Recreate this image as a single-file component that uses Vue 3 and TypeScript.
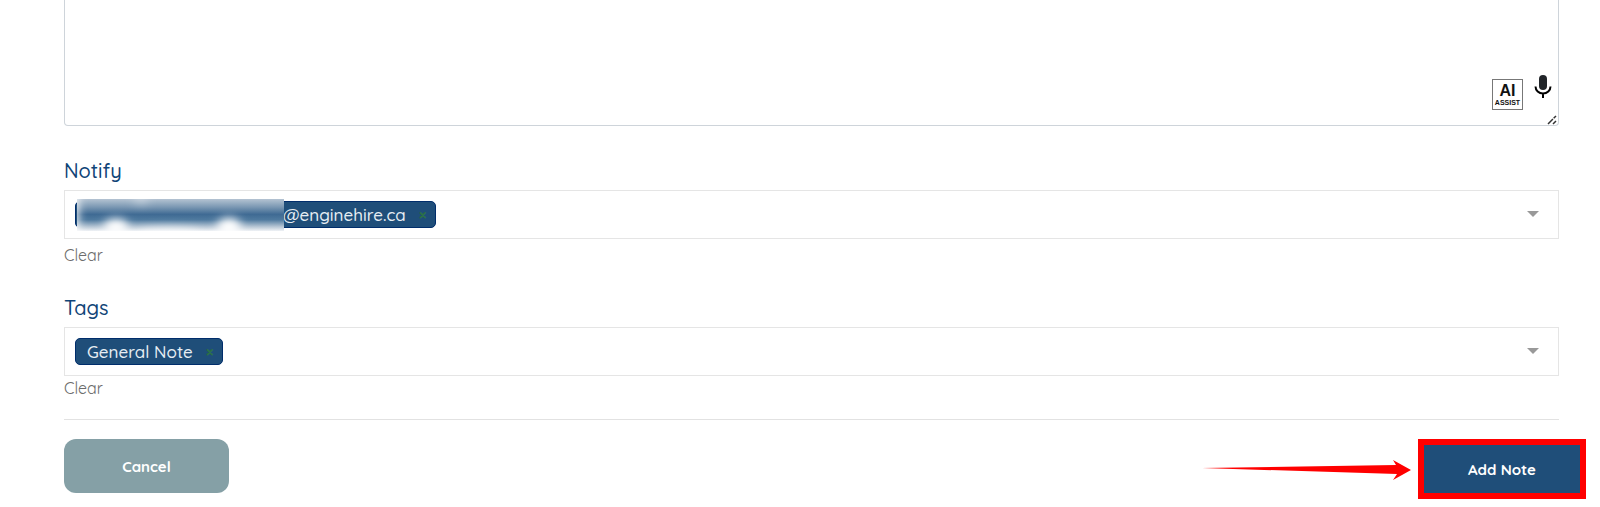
<script setup lang="ts">
import { ref } from 'vue'

interface Field {
  id: string
  label: string
  values: { text: string; masked: boolean }[]
}

const note = ref('')
const fields = ref<Field[]>([
  { id: 'notify', label: 'Notify', values: [{ text: '@enginehire.ca', masked: true }] },
  { id: 'tags', label: 'Tags', values: [{ text: 'General Note', masked: false }] },
])

function remove(field: Field, index: number) {
  field.values.splice(index, 1)
}
</script>

<template>
  <form class="note-form" @submit.prevent>
    <div class="editor">
      <textarea v-model="note" class="note" aria-label="Note"></textarea>
      <div class="tools">
        <button type="button" class="ai"><b>AI</b><span>ASSIST</span></button>
        <button type="button" class="mic" aria-label="Dictate">
          <svg width="18" height="24" viewBox="0 0 18 24">
            <rect x="5" y="0" width="8" height="15" rx="4" fill="#212529" />
            <path d="M1.500 11.500a7.500 7 0 0 0 15 0M9 18.500V23" fill="none" stroke="#000" stroke-width="2" />
          </svg>
        </button>
      </div>
      <svg class="grip" width="10" height="10" viewBox="0 0 10 10" aria-hidden="true">
        <path d="M1 9L9 1M6 9L9 6" fill="none" stroke="#333" stroke-width="1.500" stroke-dasharray="7 1" />
      </svg>
    </div>

    <section v-for="field in fields" :key="field.id" :class="['field', field.id]">
      <label class="label" :for="field.id">{{ field.label }}</label>
      <div class="select">
        <span v-for="(value, i) in field.values" :key="value.text" class="chip">
          <svg v-if="value.masked" class="mask" width="207" height="32" viewBox="0 0 207 32" aria-hidden="true">
            <defs>
              <linearGradient id="fade" x1="0" y1="0" x2="0" y2="1">
                <stop offset="0" stop-color="#b4c3d2" />
                <stop offset="0.250" stop-color="#7b98b3" />
                <stop offset="0.480" stop-color="#3f6a93" />
                <stop offset="0.650" stop-color="#4f7a9f" />
                <stop offset="0.850" stop-color="#b0c1d1" />
                <stop offset="1" stop-color="#f0f3f6" />
              </linearGradient>
              <filter id="soft" x="-20%" y="-60%" width="140%" height="220%">
                <feGaussianBlur stdDeviation="5" />
              </filter>
            </defs>
            <rect width="207" height="32" fill="url(#fade)" />
            <g filter="url(#soft)" fill="#fff">
              <ellipse cx="39" cy="28" rx="12" ry="8" />
              <ellipse cx="152" cy="28" rx="12" ry="9" />
              <ellipse cx="92" cy="34" rx="30" ry="5" opacity="0.600" />
              <rect x="-8" y="-10" width="9" height="52" />
              <ellipse cx="64" cy="0" rx="8" ry="6" opacity="0.300" />
            </g>
          </svg>
          <span class="chip-text">{{ value.text }}</span>
          <button type="button" class="remove" :aria-label="'Remove ' + value.text" @click="remove(field, i)">
            ×
          </button>
        </span>
        <input :id="field.id" class="search" type="text" autocomplete="off" />
        <svg class="caret" width="12" height="6" viewBox="0 0 12 6" aria-hidden="true">
          <path d="M0 0H12L6 6Z" fill="#999" />
        </svg>
      </div>
      <button type="button" class="clear" @click="field.values = []">Clear</button>
    </section>

    <footer class="actions">
      <button type="button" class="cancel">Cancel</button>
      <svg class="arrow" width="210" height="22" viewBox="0 0 210 22" aria-hidden="true">
        <path d="M0 9L194 6L191 1L209 11L191 21L195 15Z" fill="#f00" />
      </svg>
      <div class="highlight"><button type="submit" class="add">Add Note</button></div>
    </footer>
  </form>
</template>

<style>
body {
  margin: 0;
  background: #fff;
}
</style>

<style scoped>
* {
  box-sizing: border-box;
}
button {
  padding: 0;
  border: 0;
  background: none;
  font-family: inherit;
  cursor: pointer;
}
.note-form {
  padding: 0 41px 0 64px;
  font-family: Quicksand, Lato, sans-serif;
}
.editor {
  position: relative;
}
.note {
  display: block;
  width: 100%;
  height: 126px;
  padding: 8px 12px;
  border: 1px solid #ced4da;
  border-top: 0;
  border-radius: 0 0 4px 4px;
  outline: 0;
  font: inherit;
  resize: vertical;
}
.note::-webkit-resizer {
  background: transparent;
}
.grip {
  position: absolute;
  right: 2px;
  bottom: 1px;
  pointer-events: none;
}
.tools {
  position: absolute;
  right: 7px;
  bottom: 16px;
  display: flex;
  align-items: flex-end;
  gap: 11px;
}
.ai {
  display: flex;
  flex-direction: column;
  align-items: center;
  justify-content: center;
  width: 31px;
  height: 31px;
  border: 1px solid #777;
  font-family: "Liberation Sans", sans-serif;
  color: #111;
}
.ai b {
  font-size: 16px;
  line-height: 16px;
}
.ai span {
  font-size: 7px;
  line-height: 8px;
  font-weight: 700;
}
.mic {
  height: 35px;
  display: flex;
}
.field {
  display: flex;
  flex-direction: column;
  align-items: flex-start;
}
.notify {
  padding-top: 33px;
}
.tags {
  padding-top: 29px;
}
.label {
  line-height: 24px;
  margin-bottom: 7px;
  font-size: 20px;
  font-weight: 500;
  color: #0f4477;
}
.select {
  display: flex;
  align-items: center;
  width: 100%;
  height: 49px;
  padding: 0 19px 0 10px;
  border: 1px solid #e5e5e5;
}
.chip {
  position: relative;
  display: flex;
  align-items: center;
  height: 27px;
  padding: 0 7px 0 11px;
  border: 1px solid #002d6b;
  border-radius: 5px;
  background: #1f4e79;
  color: #e6edf3;
}
.notify .chip {
  padding-left: 207px;
}
.mask {
  position: absolute;
  left: 1px;
  top: -3px;
}
.chip-text {
  font-size: 17px;
  line-height: 24px;
  font-weight: 500;
}
.remove {
  width: 10px;
  margin-left: 12px;
  font-size: 16px;
  line-height: 24px;
  font-weight: 700;
  color: #2b7048;
}
.search {
  flex: 1;
  min-width: 0;
  border: 0;
  outline: 0;
  background: none;
  font: inherit;
}
.caret {
  margin-bottom: 2px;
}
.clear {
  font-size: 16px;
  line-height: 24px;
  color: #6c6c6c;
}
.notify .clear {
  margin-top: 4px;
}
.actions {
  display: flex;
  align-items: flex-start;
  margin-top: 19px;
  padding-top: 19px;
  border-top: 1px solid #e2e2e2;
}
.cancel {
  width: 165px;
  height: 54px;
  border-radius: 12px;
  background: #85a0a6;
  color: #fff;
  font-size: 15px;
  font-weight: 700;
}
.arrow {
  margin: 20px 6px 0 auto;
}
.highlight {
  margin-right: -27px;
  border: 6px solid #f00;
  background: #fff;
}
.add {
  display: block;
  width: 156px;
  height: 48px;
  background: #1f4e79;
  color: #fff;
  font-size: 15px;
  font-weight: 700;
}
</style>
